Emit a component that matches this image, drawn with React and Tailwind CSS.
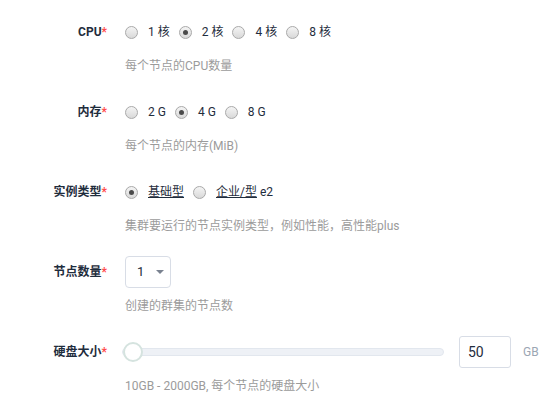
import React, { useState } from 'react';

const font = { fontFamily: 'Roboto, "Noto Sans CJK SC", sans-serif' };

const Radio = ({ checked, onClick, children }) => (
  <label className="flex cursor-pointer items-center" onClick={onClick}>
    <span className="flex h-[13px] w-[13px] items-center justify-center rounded-full border border-[#a9a9a9] bg-gradient-to-b from-[#f4f4f4] to-[#d9d9d9]">
      {checked && <span className="h-[5px] w-[5px] rounded-full bg-[#4a4a4a]" />}
    </span>
    <span className="ml-[10px] mr-[9px] text-[12px] text-[#1f2d3d]">{children}</span>
  </label>
);

const FormItem = ({ label, help, children }) => (
  <div className="mb-[21px] flex">
    <div className="h-[32px] w-[125px] pr-[18px] text-right text-[12px] font-bold leading-[33px] text-[#1f2d3d]">
      {label}
      <span className="text-[#ff4949]">*</span>
    </div>
    <div className="flex-1">
      <div className="flex h-[32px] items-center">{children}</div>
      <div className="mt-[9px] text-[12px] leading-[18px] text-[#9b9b9b]">{help}</div>
    </div>
  </div>
);

export default function App() {
  const [cpu, setCpu] = useState(2);
  const [mem, setMem] = useState(4);
  const [type, setType] = useState('basic');

  return (
    <div className="h-[397px] w-[552px] overflow-hidden bg-white pt-[16px]" style={font}>
      <FormItem label="CPU" help="每个节点的CPU数量">
        {[1, 2, 4, 8].map((n) => (
          <Radio key={n} checked={cpu === n} onClick={() => setCpu(n)}>
            {n} 核
          </Radio>
        ))}
      </FormItem>

      <FormItem label="内存" help="每个节点的内存(MiB)">
        {[2, 4, 8].map((n) => (
          <Radio key={n} checked={mem === n} onClick={() => setMem(n)}>
            {n} G
          </Radio>
        ))}
      </FormItem>

      <FormItem label="实例类型" help="集群要运行的节点实例类型，例如性能，高性能plus">
        <Radio checked={type === 'basic'} onClick={() => setType('basic')}>
          <span className="underline">基础型</span>
        </Radio>
        <Radio checked={type === 'ent'} onClick={() => setType('ent')}>
          <span className="underline">企业/型</span> e2
        </Radio>
      </FormItem>

      <FormItem label="节点数量" help="创建的群集的节点数">
        <div className="flex h-[32px] w-[46px] items-center rounded-[4px] border border-[#d8dde6] pl-[11px] text-[13px] text-[#1f2d3d]">
          <span>1</span>
          <span className="ml-[12px] h-0 w-0 border-x-[4px] border-t-[4px] border-x-transparent border-t-[#7a8290]" />
        </div>
      </FormItem>

      <FormItem label="硬盘大小" help="10GB - 2000GB, 每个节点的硬盘大小">
        <div className="relative ml-[-3px] flex h-[32px] w-[322px] items-center">
          <div className="h-[8px] w-full rounded-full border border-[#e2e7ee] bg-[#eef1f6]" />
          <div className="absolute left-[1px] top-[6px] h-[20px] w-[20px] rounded-full border-2 border-[#d5e3df] bg-white" />
        </div>
        <div className="ml-[15px] flex h-[32px] w-[52px] items-center rounded-[3px] border border-[#d8dde6] pl-[8px] text-[14px] text-[#1f2d3d]">
          50
        </div>
        <span className="ml-[12px] text-[12px] text-[#9ba6b3]">GB</span>
      </FormItem>
    </div>
  );
}
